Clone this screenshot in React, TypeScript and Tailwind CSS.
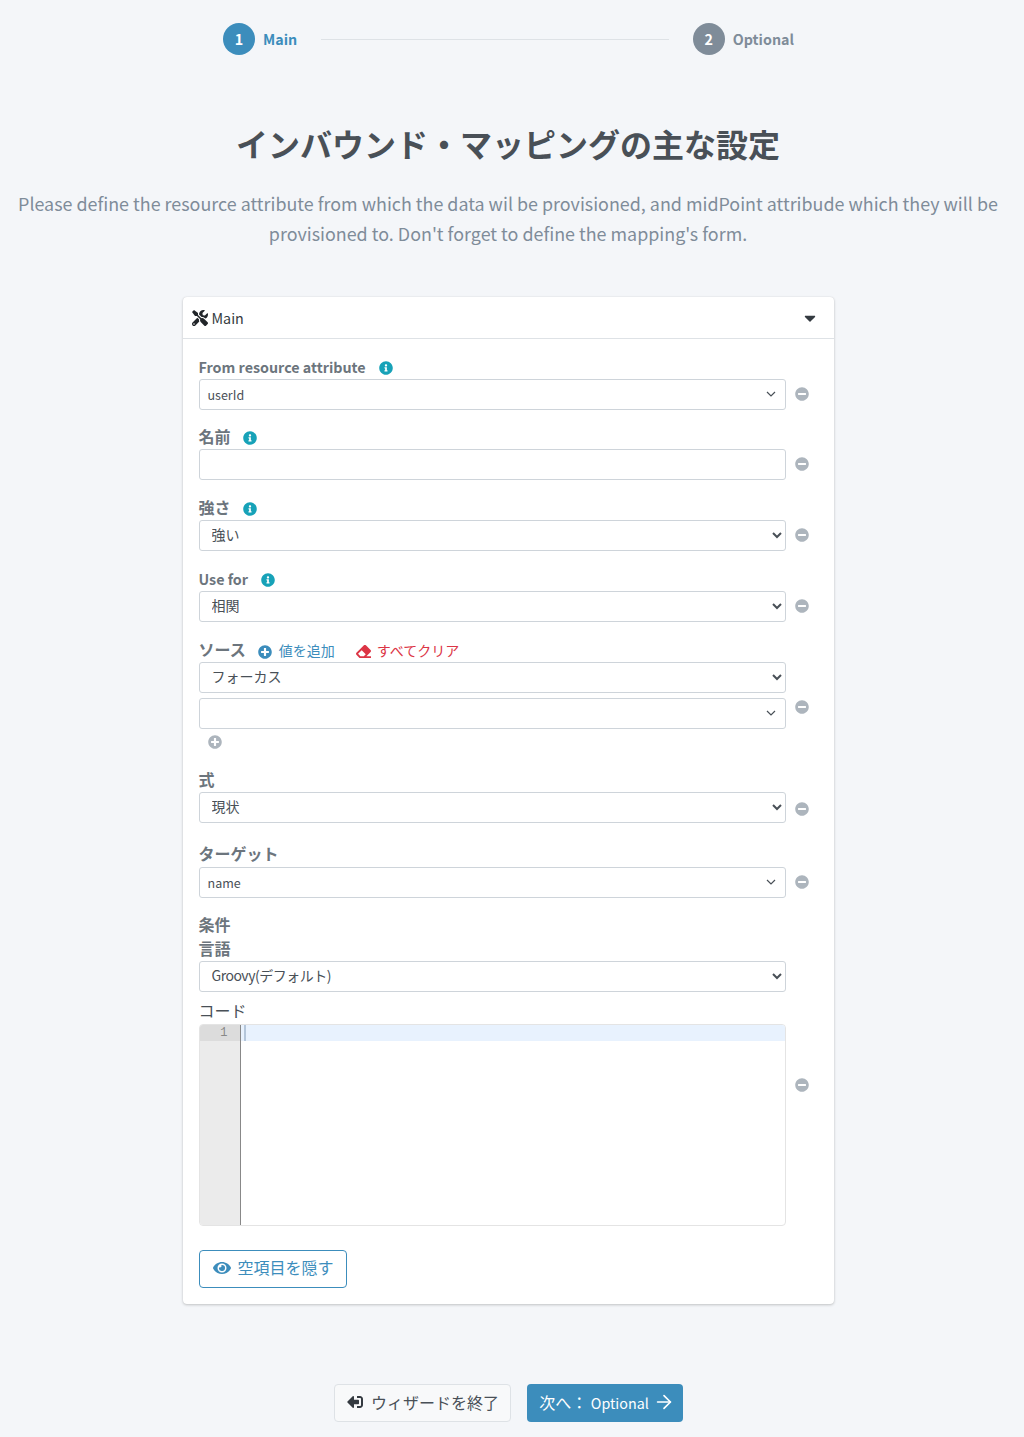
import { FaTools, FaCaretDown, FaInfoCircle, FaMinusCircle, FaPlusCircle, FaEraser, FaEye, FaSignOutAlt } from 'react-icons/fa';
import { ArrowRight } from 'lucide-react';
import type { ReactNode } from 'react';

function Label({ text, info, latin, className = 'mb-[6px]' }: { text: string; info?: boolean; latin?: boolean; className?: string }) {
  return (
    <div className="flex h-[21px] items-center font-bold text-[#6c757d]">
      <span className={`${latin ? 'text-[14.3px]' : 'text-[16px]'} ${className}`}>{text}</span>
      {info && <FaInfoCircle className={`mb-[2px] text-[14px] text-[#17a2b8] ${latin ? 'ml-[13px]' : 'ml-[12px]'}`} />}
    </div>
  );
}

function Row({ children, className = '', minus = 'pt-[20px]' }: { children: ReactNode; className?: string; minus?: string }) {
  return (
    <div className={`flex ${className}`}>
      <div className="w-[587px] shrink-0">{children}</div>
      <div className={`flex w-[33px] shrink-0 items-center justify-center ${minus}`}>
        <FaMinusCircle className="text-[14px] text-[#adb5bd]" />
      </div>
    </div>
  );
}

// the attribute pickers with the thin chevron
function Picker({ value = '' }: { value?: string }) {
  return (
    <div className="flex h-[31px] items-center justify-between rounded-[3px] border border-[#ced4da] bg-white pl-2 pr-[9px] text-[12.5px] text-[#495057]">
      <span className="pt-[2px]">{value}</span>
      <svg width="10" height="7" viewBox="0 0 10 7" fill="none" stroke="#495057" strokeWidth="1.2">
        <path d="M1 1l4 4 4-4" />
      </svg>
    </div>
  );
}

function Select({ value, className = '' }: { value: string; className?: string }) {
  return (
    <select
      defaultValue={value}
      className={`block h-[31px] w-full rounded-[3px] border border-[#ced4da] bg-white pb-[3px] pl-2 text-[14px] text-[#495057] ${className}`}
    >
      <option>{value}</option>
    </select>
  );
}

export default function App() {
  return (
    <div className="h-[1437px] w-[1024px] overflow-hidden bg-[#f4f6f9] font-['Noto_Sans_CJK_JP',sans-serif] text-[#212529]">
      <div className="w-[1016px]">
        <div className="ml-[223px] mt-[23px] flex h-[32px] w-[571px] items-center">
          <div className="flex h-8 w-8 items-center justify-center rounded-full bg-[#3c8dbc] text-[14.3px] font-bold text-white">1</div>
          <span className="ml-2 text-[14.3px] font-bold text-[#3c8dbc]">Main</span>
          <div className="mx-6 h-px flex-1 bg-[#dee2e6]" />
          <div className="flex h-8 w-8 items-center justify-center rounded-full bg-[#7f8c99] text-[14.3px] font-bold text-white">2</div>
          <span className="ml-2 text-[14.3px] font-bold text-[#7f8c99]">Optional</span>
        </div>

        <h1 className="mt-[64px] h-[48px] text-center text-[32px] font-bold leading-[48px] text-[#495057]">
          インバウンド・マッピングの主な設定
        </h1>
        <p className="mt-[21px] text-center text-[17.9px] leading-[30px] text-[#7f8c99]">
          Please define the resource attribute from which the data wil be provisioned, and midPoint attribude which they will be provisioned to. Don't forget to define the mapping's form.
        </p>

        <div className="mx-auto mt-[49px] h-[1007px] w-[651px] rounded-[4px] bg-white shadow-[0_0_1px_rgba(0,0,0,0.13),0_1px_3px_rgba(0,0,0,0.2)]">
          <div className="flex h-[42px] items-center justify-between border-b border-[#dee2e6] pl-[9px] pr-[15px]">
            <div className="flex items-center gap-[4px] text-[14.3px] text-[#343a40]">
              <FaTools className="text-[16px] text-[#212529]" />
              Main
            </div>
            <FaCaretDown className="text-[18px] text-[#343a40]" />
          </div>

          <div className="px-4 pt-[19px]">
            <Row>
              <Label text="From resource attribute" latin info className="mb-[4px]" />
              <Picker value="userId" />
            </Row>
            <Row className="mt-[18px]">
              <Label text="名前" info />
              <input className="block h-[31px] w-full rounded-[3px] border border-[#ced4da] bg-white" />
            </Row>
            <Row className="mt-[19px]">
              <Label text="強さ" info />
              <Select value="強い" />
            </Row>
            <Row className="mt-[19px]">
              <Label text="Use for" latin info className="mb-[4px]" />
              <Select value="相関" />
            </Row>
            <Row className="mt-[19px]" minus="pt-[24px]">
              <div className="flex h-[21px] items-center text-[14px]">
                <span className="mb-[6px] text-[16px] font-bold text-[#6c757d]">ソース</span>
                <FaPlusCircle className="ml-[12px] text-[14px] text-[#3c8dbc]" />
                <span className="mb-[2px] ml-[7px] text-[#3c8dbc]">値を追加</span>
                <FaEraser className="ml-[21px] text-[15px] text-[#dc3545]" />
                <span className="mb-[2px] ml-[6px] text-[#dc3545]">すべてクリア</span>
              </div>
              <Select value="フォーカス" />
              <div className="mt-[5px]">
                <Picker />
              </div>
              <FaPlusCircle className="ml-[9px] mt-[6px] text-[14px] text-[#adb5bd]" />
            </Row>
            <Row className="mt-[22px]" minus="pt-[24px]">
              <Label text="式" />
              <Select value="現状" />
            </Row>
            <Row className="mt-[23px]">
              <Label text="ターゲット" className="mb-[8px]" />
              <Picker value="name" />
            </Row>
            <Row className="mt-[17px]" minus="pt-[28px]">
              <Label text="条件" className="mb-[4px]" />
              <div className="mt-[3px]">
                <Label text="言語" className="mb-[4px]" />
              </div>
              <div className="mt-px">
                <Select value="Groovy(デフォルト)" className="tracking-[-0.5px]" />
              </div>
              <div className="mt-[11px] flex h-[21px] items-center text-[16px] text-[#495057]">
                <span className="mb-[8px]">コード</span>
              </div>
              <div className="flex h-[202px] overflow-hidden rounded-[4px] border border-[#e4e4e4] bg-white">
                <div className="w-[41px] shrink-0 border-r border-[#888] bg-[#ebebeb]">
                  <div className="h-[16px] bg-[#dcdcdc] pr-[12px] text-right font-['Liberation_Mono',monospace] text-[12px] leading-[16px] text-[#888]">1</div>
                </div>
                <div className="h-[16px] flex-1 bg-[#e8f2fe]">
                  <div className="ml-[3px] h-[16px] w-[2px] bg-[#b4c6da]" />
                </div>
              </div>
            </Row>
            <button className="mt-[24px] flex h-[38px] w-[148px] items-center gap-[7px] rounded-[4px] border border-[#3c8dbc] pb-[4px] pl-[13px] text-[16px] text-[#3c8dbc]">
              <FaEye className="mt-[2px] text-[18px]" />
              空項目を隠す
            </button>
          </div>
        </div>

        <div className="mt-[80px] flex justify-center gap-4 pl-[1px]">
          <button className="flex h-[38px] w-[177px] items-center justify-center gap-[8px] rounded-[4px] border border-[#dee2e6] bg-[#f8f9fa] pb-[2px] pl-[1px] text-[16px] text-[#495057]">
            <FaSignOutAlt className="-scale-x-100 text-[16px] text-[#343a40]" />
            ウィザードを終了
          </button>
          <button className="flex h-[38px] w-[156px] items-center justify-center gap-[4px] rounded-[4px] bg-[#3c8dbc] pb-[2px] pl-[4px] text-[16px] text-white">
            <span>
              次へ： <span className="text-[14.3px]">Optional</span>
            </span>
            <ArrowRight size={22} strokeWidth={1.8} />
          </button>
        </div>
      </div>
    </div>
  );
}
